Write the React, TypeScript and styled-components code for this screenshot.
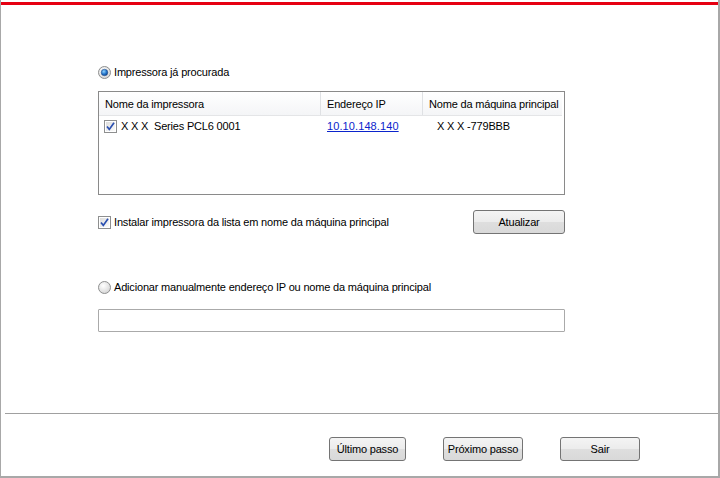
import React, { FC } from "react";
import styled, { createGlobalStyle } from "styled-components";

const GlobalStyle = createGlobalStyle`
  html, body {
    margin: 0;
    padding: 0;
    background: #ffffff;
  }
  body {
    font-family: "Liberation Sans", "DejaVu Sans", Arial, sans-serif;
    font-size: 11px;
    letter-spacing: -0.18px;
    color: #000;
  }
`;

const Frame = styled.div`
  width: 720px;
  height: 478px;
  box-sizing: border-box;
  border-left: 1px solid #a8a8a8;
  border-right: 2px solid #a8a8a8;
  border-bottom: 2px solid #a8a8a8;
  display: flex;
  flex-direction: column;
  background: #fff;
`;

const RedBar = styled.div`
  margin-top: 2px;
  height: 3px;
  background: #e60012;
`;

const Content = styled.div`
  flex: 1;
  padding: 61px 0 0 97px;
  width: 467px;
  display: flex;
  flex-direction: column;
`;

const OptionRow = styled.label<{ $top?: number }>`
  display: flex;
  align-items: center;
  gap: 3px;
  height: 13px;
  margin-top: ${(p) => p.$top ?? 0}px;
  line-height: 13px;
`;

const ListBox = styled.div`
  margin-top: 12px;
  height: 102px;
  border: 1px solid #8a8a8a;
  box-sizing: content-box;
`;

const HeaderRow = styled.div`
  display: grid;
  grid-template-columns: 222px 102px 139px;
  height: 23px;
  background: linear-gradient(#ffffff, #f4f5f7);
  border-bottom: 1px solid #e4e5e7;
  margin-right: 2px;
`;

const HeaderCell = styled.div<{ $last?: boolean }>`
  display: flex;
  align-items: center;
  padding-left: 6px;
  white-space: nowrap;
  border-right: ${(p) => (p.$last ? "none" : "1px solid #dfe1e4")};
`;

const DataRow = styled.div`
  display: grid;
  grid-template-columns: 222px 102px 139px;
  height: 20px;
  align-items: center;
`;

const DataCell = styled.div<{ $pad: number }>`
  display: flex;
  align-items: center;
  gap: 4px;
  white-space: nowrap;
  padding-left: ${(p) => p.$pad}px;
`;

const IpLink = styled.a`
  color: #0b24cc;
  text-decoration: underline;
  letter-spacing: 0.1px;
`;

const InstallRow = styled.div`
  margin-top: 15px;
  display: flex;
  align-items: center;
  justify-content: space-between;
`;

const WinButton = styled.button<{ $w: number }>`
  width: ${(p) => p.$w}px;
  height: 24px;
  padding: 0;
  border: 1px solid #747474;
  border-radius: 3px;
  background: linear-gradient(#f4f4f4 0%, #ececec 48%, #dedede 52%, #d9d9d9 100%);
  font-family: inherit;
  font-size: 11px;
  letter-spacing: -0.18px;
  color: #000;
`;

const TextField = styled.div`
  margin-top: 15px;
  height: 21px;
  border: 1px solid #aaaaaa;
  border-radius: 1px;
`;

const Separator = styled.div`
  margin-left: 4px;
  height: 1px;
  background: #a0a0a0;
  border-bottom: 1px solid #ffffff;
`;

const Footer = styled.div`
  height: 61px;
  display: flex;
  justify-content: flex-end;
  align-items: flex-start;
  padding: 22px 78px 0 0;
  box-sizing: border-box;
  gap: 37px;
`;

const Radio: FC<{ checked?: boolean }> = ({ checked }) => (
  <svg width="13" height="13" viewBox="0 0 13 13">
    <defs>
      <radialGradient id={checked ? "rg-on" : "rg-off"} cx="0.4" cy="0.35" r="0.7">
        <stop offset="0" stopColor="#ffffff" />
        <stop offset="1" stopColor="#d4d4d4" />
      </radialGradient>
      <radialGradient id="rdot" cx="0.4" cy="0.35" r="0.7">
        <stop offset="0" stopColor="#8fd4ff" />
        <stop offset="0.6" stopColor="#1f6fc6" />
        <stop offset="1" stopColor="#0d3f86" />
      </radialGradient>
    </defs>
    <circle cx="6.5" cy="6.5" r="6" fill={`url(#${checked ? "rg-on" : "rg-off"})`} stroke="#8e8f8f" />
    {checked && <circle cx="6.5" cy="6.5" r="3.3" fill="url(#rdot)" stroke="#2b4f87" strokeWidth="0.5" />}
  </svg>
);

const Check: FC = () => (
  <svg width="13" height="13" viewBox="0 0 13 13">
    <defs>
      <linearGradient id="cbg" x1="0" y1="0" x2="1" y2="1">
        <stop offset="0" stopColor="#dcdcdc" />
        <stop offset="1" stopColor="#fbfbfb" />
      </linearGradient>
    </defs>
    <rect x="0.5" y="0.5" width="12" height="12" fill="#fff" stroke="#8e8f8f" />
    <rect x="2" y="2" width="9" height="9" fill="url(#cbg)" />
    <path d="M3 6.5 L5.3 9.4 L10 2.8" fill="none" stroke="#2a4fb0" strokeWidth="1.7" />
  </svg>
);

const App: FC = () => {
  return (
    <>
      <GlobalStyle />
      <Frame>
        <RedBar />
        <Content>
          <OptionRow>
            <Radio checked />
            Impressora já procurada
          </OptionRow>
          <ListBox>
            <HeaderRow>
              <HeaderCell>Nome da impressora</HeaderCell>
              <HeaderCell>Endereço IP</HeaderCell>
              <HeaderCell $last>Nome da máquina principal</HeaderCell>
            </HeaderRow>
            <DataRow>
              <DataCell $pad={5}>
                <Check />
                X X X&nbsp; Series PCL6 0001
              </DataCell>
              <DataCell $pad={6}>
                <IpLink href="#">10.10.148.140</IpLink>
              </DataCell>
              <DataCell $pad={14}>X X X -779BBB</DataCell>
            </DataRow>
          </ListBox>
          <InstallRow>
            <OptionRow>
              <Check />
              Instalar impressora da lista em nome da máquina principal
            </OptionRow>
            <WinButton $w={92}>Atualizar</WinButton>
          </InstallRow>
          <OptionRow $top={47}>
            <Radio />
            Adicionar manualmente endereço IP ou nome da máquina principal
          </OptionRow>
          <TextField />
        </Content>
        <Separator />
        <Footer>
          <WinButton $w={77}>Último passo</WinButton>
          <WinButton $w={80}>Próximo passo</WinButton>
          <WinButton $w={80}>Sair</WinButton>
        </Footer>
      </Frame>
    </>
  );
};

export default App;
